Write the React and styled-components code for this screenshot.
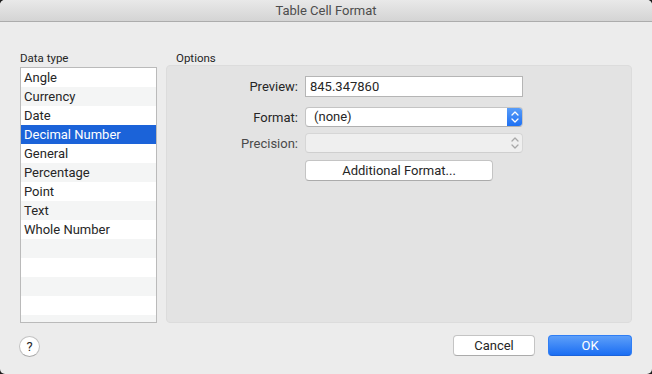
import React from 'react';
import styled, { createGlobalStyle } from 'styled-components';

const GlobalStyle = createGlobalStyle`
  html, body {
    margin: 0;
    padding: 0;
    background: #1c1c1c;
  }
  * {
    box-sizing: border-box;
  }
`;

const dataTypes = [
  'Angle',
  'Currency',
  'Date',
  'Decimal Number',
  'General',
  'Percentage',
  'Point',
  'Text',
  'Whole Number',
  '',
  '',
  '',
  '',
  '',
];

const Stepper = ({ disabled }) => (
  <svg width="16" height="20" viewBox="0 0 16 20">
    <path
      d="M5 8 L8 5 L11 8"
      fill="none"
      stroke={disabled ? '#a8a8a8' : '#ffffff'}
      strokeWidth="1.3"
      strokeLinecap="round"
      strokeLinejoin="round"
    />
    <path
      d="M5 12 L8 15 L11 12"
      fill="none"
      stroke={disabled ? '#a8a8a8' : '#ffffff'}
      strokeWidth="1.3"
      strokeLinecap="round"
      strokeLinejoin="round"
    />
  </svg>
);

const App = () => (
  <>
    <GlobalStyle />
    <Window>
      <TitleBar>Table Cell Format</TitleBar>
      <Main>
        <Column>
          <SectionLabel>Data type</SectionLabel>
          <List>
            {dataTypes.map((name, index) => (
              <Row key={index} $alt={index % 2 === 1} $selected={index === 3}>
                {name}
              </Row>
            ))}
          </List>
        </Column>
        <Column>
          <SectionLabel $indent>Options</SectionLabel>
          <Group>
            <Field $mt={10}>
              <FieldLabel>Preview:</FieldLabel>
              <TextInput>845.347860</TextInput>
            </Field>
            <Field $mt={10}>
              <FieldLabel>Format:</FieldLabel>
              <Popup>
                <PopupValue>(none)</PopupValue>
                <PopupArrows>
                  <Stepper />
                </PopupArrows>
              </Popup>
            </Field>
            <Field $mt={6}>
              <FieldLabel $disabled>Precision:</FieldLabel>
              <Popup $disabled>
                <PopupValue />
                <PopupArrows $disabled>
                  <Stepper disabled />
                </PopupArrows>
              </Popup>
            </Field>
            <Field $mt={7}>
              <span />
              <Button $width={188}>Additional Format...</Button>
            </Field>
          </Group>
        </Column>
      </Main>
      <Footer>
        <HelpButton>?</HelpButton>
        <Actions>
          <Button $width={82}>Cancel</Button>
          <Button $width={84} $primary>
            OK
          </Button>
        </Actions>
      </Footer>
    </Window>
  </>
);

const Window = styled.div`
  width: 652px;
  height: 374px;
  background: #ececec;
  border-radius: 5px;
  overflow: hidden;
  display: flex;
  flex-direction: column;
  font-family: Roboto, 'Liberation Sans', Arial, sans-serif;
  color: #262626;
`;

const TitleBar = styled.div`
  height: 22px;
  flex-shrink: 0;
  display: flex;
  align-items: center;
  justify-content: center;
  background: linear-gradient(#e9e9e9, #d4d4d4);
  border-bottom: 1px solid #acacac;
  font-size: 13px;
  color: #4d4d4d;
`;

const Main = styled.div`
  display: grid;
  grid-template-columns: 137px 466px;
  column-gap: 9px;
  padding: 29px 0 0 20px;
`;

const Column = styled.div`
  display: flex;
  flex-direction: column;
`;

const SectionLabel = styled.div`
  height: 14px;
  line-height: 14px;
  font-size: 11.5px;
  padding-left: ${(props) => (props.$indent ? '10px' : '0')};
  margin-bottom: ${(props) => (props.$indent ? '0' : '2px')};
`;

const List = styled.div`
  height: 256px;
  border: 1px solid #bababa;
  background: #ffffff;
  overflow: hidden;
`;

const Row = styled.div`
  height: 19px;
  line-height: 19px;
  padding-left: 3px;
  font-size: 13px;
  white-space: nowrap;
  background: ${(props) =>
    props.$selected ? '#1b63d9' : props.$alt ? '#f4f5f5' : '#ffffff'};
  color: ${(props) => (props.$selected ? '#ffffff' : '#262626')};
`;

const Group = styled.div`
  height: 258px;
  background: #e3e3e3;
  border: 1px solid #dcdcdc;
  border-radius: 4px;
  display: flex;
  flex-direction: column;
`;

const Field = styled.div`
  display: grid;
  grid-template-columns: 131px 218px;
  column-gap: 7px;
  align-items: center;
  margin-top: ${(props) => props.$mt}px;
`;

const FieldLabel = styled.div`
  text-align: right;
  font-size: 13px;
  color: ${(props) => (props.$disabled ? '#4a4a4a' : '#262626')};
`;

const TextInput = styled.div`
  height: 21px;
  line-height: 19px;
  padding-left: 4px;
  background: #ffffff;
  border: 1px solid #b5b5b5;
  font-size: 13px;
`;

const Popup = styled.div`
  height: 20px;
  display: flex;
  border-radius: 4px;
  overflow: hidden;
  background: ${(props) => (props.$disabled ? '#efefef' : '#ffffff')};
  border: 1px solid ${(props) => (props.$disabled ? '#d6d6d6' : '#c4c4c4')};
  border-bottom-color: ${(props) => (props.$disabled ? '#cfcfcf' : '#b0b0b0')};
`;

const PopupValue = styled.div`
  flex: 1;
  line-height: 18px;
  padding-left: 8px;
  font-size: 13px;
`;

const PopupArrows = styled.div`
  width: 16px;
  margin: -1px -1px -1px 0;
  display: flex;
  align-items: center;
  justify-content: center;
  background: ${(props) =>
    props.$disabled ? 'transparent' : 'linear-gradient(#5b9ff9, #1c6ef2)'};
`;

const Button = styled.div`
  width: ${(props) => props.$width}px;
  height: 21px;
  display: flex;
  align-items: center;
  justify-content: center;
  border-radius: 4px;
  font-size: 13px;
  background: ${(props) =>
    props.$primary ? 'linear-gradient(#5d9ff9, #1b6ef3)' : '#ffffff'};
  color: ${(props) => (props.$primary ? '#ffffff' : '#262626')};
  border: 1px solid ${(props) => (props.$primary ? '#2f7ef5' : '#c4c4c4')};
  border-bottom-color: ${(props) => (props.$primary ? '#1a62da' : '#ababab')};
`;

const Footer = styled.div`
  display: flex;
  align-items: center;
  justify-content: space-between;
  padding: 11px 20px 0 19px;
`;

const HelpButton = styled.div`
  width: 21px;
  height: 21px;
  margin-top: 2px;
  border-radius: 50%;
  background: #ffffff;
  border: 1px solid #c2c2c2;
  border-bottom-color: #a9a9a9;
  display: flex;
  align-items: center;
  justify-content: center;
  font-size: 13px;
  color: #262626;
`;

const Actions = styled.div`
  display: flex;
  gap: 13px;
`;

export default App;
